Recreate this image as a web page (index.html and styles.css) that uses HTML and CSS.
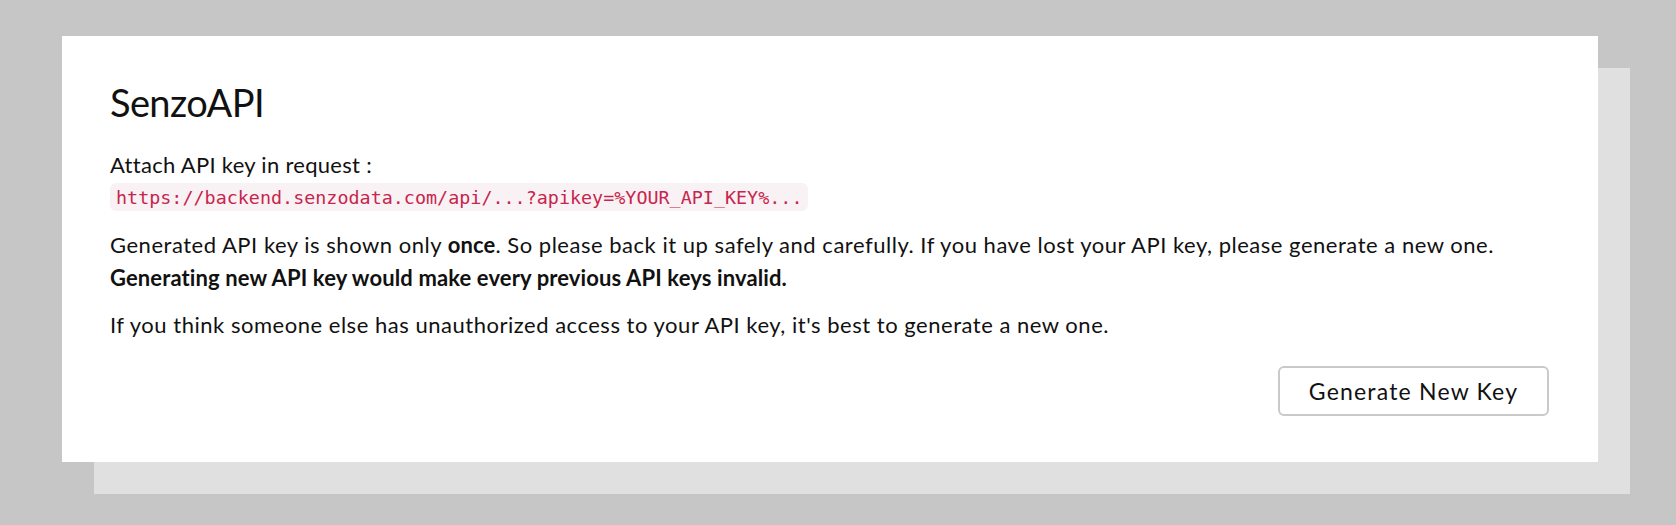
FILE: index.html
```html
<!DOCTYPE html>
<html lang="en">
<head>
<meta charset="utf-8">
<title>SenzoAPI</title>
<link rel="stylesheet" href="styles.css">
</head>
<body>
  <main class="page">
    <section class="card">
      <h1 class="card-title">SenzoAPI</h1>
      <p class="text text-first">Attach API key in request :<br><code class="code">https://backend.senzodata.com/api/...?apikey=%YOUR_API_KEY%...</code></p>
      <p class="text">Generated API key is shown only <strong>once</strong>. So please back it up safely and carefully. If you have lost your API key, please generate a new one.<br><strong>Generating new API key would make every previous API keys invalid.</strong></p>
      <p class="text">If you think someone else has unauthorized access to your API key, it's best to generate a new one.</p>
      <div class="actions">
        <button class="btn" type="button">Generate New Key</button>
      </div>
    </section>
  </main>
</body>
</html>
```

FILE: styles.css
```css
* { box-sizing: border-box; }

html, body {
  margin: 0;
  padding: 0;
  background: #c6c6c6;
}

body {
  font-family: Lato, "Noto Sans", sans-serif;
  color: #111;
  width: 1676px;
  height: 525px;
}

.page {
  padding: 36px 78px 0 62px;
}

.card {
  background: #fff;
  box-shadow: 32px 32px 0 0 #e0e0e0;
  padding: 44px 49px 45px 48px;
  height: 426px;
}

.card-title {
  margin: 0 0 22px;
  font-size: 38px;
  line-height: 1.2;
  font-weight: 400;
  letter-spacing: -0.6px;
}

.text {
  margin: 0 0 14px;
  font-size: 22px;
  line-height: 33px;
  letter-spacing: 0.52px;
}

.text-first {
  margin-bottom: 12px;
  letter-spacing: 0.3px;
}

.text strong {
  font-weight: 700;
  letter-spacing: 0.12px;
}

.code {
  font-family: "DejaVu Sans Mono", monospace;
  font-size: 18.4px;
  letter-spacing: 0;
  color: #c7254e;
  background: #f9f2f4;
  padding: 3.5px 6px;
  border-radius: 6px;
  position: relative;
  top: -2px;
}

.actions {
  display: flex;
  justify-content: flex-end;
  margin-top: 25px;
}

.btn {
  width: 271px;
  height: 50px;
  background: #fff;
  border: 2px solid #c9c9c9;
  border-radius: 6px;
  font-family: Lato, "Noto Sans", sans-serif;
  font-size: 23px;
  letter-spacing: 1.2px;
  color: #111;
}
```
